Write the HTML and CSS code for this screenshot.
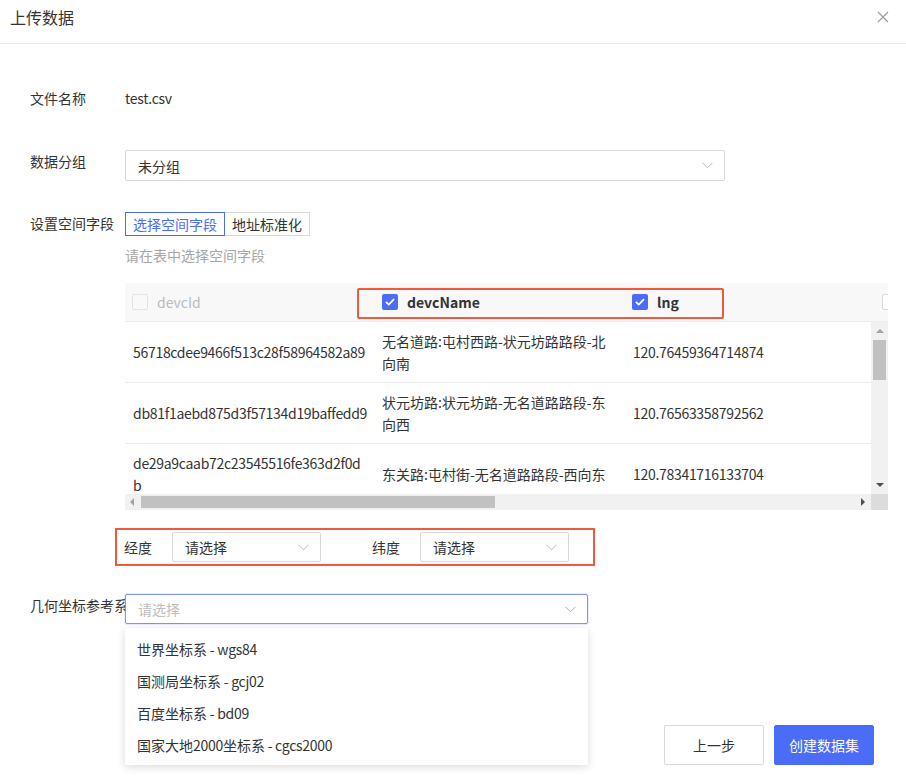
FILE: index.html
```html
<!DOCTYPE html>
<html lang="zh-CN">
<head>
<meta charset="utf-8">
<title>上传数据</title>
<link rel="stylesheet" href="styles.css">
</head>
<body>
<div class="modal">
  <div class="modal-header">
    <span class="modal-title">上传数据</span>
    <svg class="close" width="12" height="12" viewBox="0 0 12 12"><path d="M1 1L11 11M11 1L1 11" stroke="#999" stroke-width="1.1" fill="none"/></svg>
  </div>

  <div class="modal-body">
    <div class="form-item item-file">
      <div class="form-label">文件名称</div>
      <div class="form-value lt">test.csv</div>
    </div>

    <div class="form-item item-group">
      <div class="form-label">数据分组</div>
      <div class="select select-group">
        <span class="select-text">未分组</span>
        <svg class="chevron" width="11" height="7" viewBox="0 0 11 7"><path d="M0.5 0.8L5.5 5.8L10.5 0.8" stroke="#bbb" stroke-width="1" fill="none"/></svg>
      </div>
    </div>

    <div class="form-item item-spatial">
      <div class="form-label">设置空间字段</div>
      <div class="form-content">
        <div class="radio-group">
          <span class="radio-btn active">选择空间字段</span><span class="radio-btn">地址标准化</span>
        </div>
        <div class="hint">请在表中选择空间字段</div>

        <div class="table">
          <div class="thead">
            <div class="th"><span class="cb cb-disabled"></span><span class="th-text disabled">devcId</span></div>
            <div class="th"><span class="cb cb-checked"><svg width="10" height="8" viewBox="0 0 10 8"><path d="M1 4L3.8 6.6L9 1.2" stroke="#fff" stroke-width="1.8" fill="none"/></svg></span><span class="th-text">devcName</span></div>
            <div class="th"><span class="cb cb-checked"><svg width="10" height="8" viewBox="0 0 10 8"><path d="M1 4L3.8 6.6L9 1.2" stroke="#fff" stroke-width="1.8" fill="none"/></svg></span><span class="th-text">lng</span></div>
            <div class="th"><span class="cb cb-empty"></span></div>
          </div>
          <div class="tbody-wrap">
            <div class="tbody-view">
              <div class="tr">
                <div class="td lt">56718cdee9466f513c28f58964582a89</div>
                <div class="td">无名道路:屯村西路-状元坊路路段-北向南</div>
                <div class="td lt">120.76459364714874</div>
                <div class="td"></div>
              </div>
              <div class="tr">
                <div class="td lt">db81f1aebd875d3f57134d19baffedd9</div>
                <div class="td">状元坊路:状元坊路-无名道路路段-东向西</div>
                <div class="td lt">120.76563358792562</div>
                <div class="td"></div>
              </div>
              <div class="tr">
                <div class="td lt">de29a9caab72c23545516fe363d2f0d<br>b</div>
                <div class="td">东关路:屯村街-无名道路路段-西向东</div>
                <div class="td lt">120.78341716133704</div>
                <div class="td"></div>
              </div>
            </div>
            <div class="vscroll">
              <span class="arrow arrow-up"></span>
              <span class="vthumb"></span>
              <span class="arrow arrow-down"></span>
            </div>
          </div>
          <div class="hscroll-row">
            <div class="hscroll">
              <span class="arrow arrow-left"></span>
              <span class="hthumb"></span>
              <span class="arrow arrow-right"></span>
            </div>
            <div class="corner"></div>
          </div>
          <div class="hl-header"></div>
        </div>

        <div class="latlng">
          <span class="ll-label">经度</span>
          <div class="select select-ll">
            <span class="select-text">请选择</span>
            <svg class="chevron" width="11" height="7" viewBox="0 0 11 7"><path d="M0.5 0.8L5.5 5.8L10.5 0.8" stroke="#bbb" stroke-width="1" fill="none"/></svg>
          </div>
          <span class="ll-label ll-label2">纬度</span>
          <div class="select select-ll">
            <span class="select-text">请选择</span>
            <svg class="chevron" width="11" height="7" viewBox="0 0 11 7"><path d="M0.5 0.8L5.5 5.8L10.5 0.8" stroke="#bbb" stroke-width="1" fill="none"/></svg>
          </div>
        </div>
      </div>
    </div>

    <div class="form-item item-crs">
      <div class="form-label">几何坐标参考系</div>
      <div class="crs-wrap">
        <div class="select select-crs">
          <span class="select-text placeholder">请选择</span>
          <svg class="chevron" width="11" height="7" viewBox="0 0 11 7"><path d="M0.5 0.8L5.5 5.8L10.5 0.8" stroke="#aaa" stroke-width="1" fill="none"/></svg>
        </div>
        <div class="dropdown">
          <div class="option">世界坐标系<span class="lt"> - wgs84</span></div>
          <div class="option">国测局坐标系<span class="lt"> - gcj02</span></div>
          <div class="option">百度坐标系<span class="lt"> - bd09</span></div>
          <div class="option">国家大地<span class="lt">2000</span>坐标系<span class="lt"> - cgcs2000</span></div>
        </div>
      </div>
    </div>
  </div>

  <div class="modal-footer">
    <button class="btn btn-default">上一步</button>
    <button class="btn btn-primary">创建数据集</button>
  </div>
</div>
</body>
</html>
```

FILE: styles.css
```css
* { box-sizing: border-box; }
html, body { margin: 0; padding: 0; background: #fff; }
body {
  font-family: "Noto Sans CJK SC", "Noto Sans", sans-serif;
  font-size: 14px;
  color: #333;
}
.lt { letter-spacing: -0.3px; }
.modal {
  width: 906px;
  height: 780px;
  display: flex;
  flex-direction: column;
  background: #fff;
  overflow: hidden;
}
.modal-header {
  height: 44px;
  padding: 5px 16px 0 10px;
  border-bottom: 1px solid #e8e8e8;
  display: flex;
  justify-content: space-between;
  align-items: flex-start;
}
.modal-title { font-size: 16px; line-height: 24px; color: #333; }
.close { margin-top: 6px; margin-right: 1px; }

.modal-body { padding: 43px 0 0 30px; }
.form-item { display: flex; align-items: flex-start; }
.form-label { width: 95px; flex: none; line-height: 22px; white-space: nowrap; color: #333; }
.form-value { line-height: 22px; }
.item-group { margin-top: 41px; }
.item-spatial { margin-top: 31px; }
.item-crs { margin-top: 28px; }
.item-crs .form-label { margin-top: 0; }

.select {
  position: relative;
  display: flex;
  align-items: center;
  justify-content: space-between;
  border: 1px solid #d9d9d9;
  border-radius: 2px;
  background: #fff;
  padding: 0 11px 0 12px;
}
.select-text { line-height: 20px; color: #333; }
.select-text.placeholder { color: #bdbdbd; }
.select-group { width: 600px; height: 31px; }

.radio-group { display: flex; }
.radio-btn {
  height: 24px;
  line-height: 22px;
  padding: 0 7px;
  border: 1px solid #d9d9d9;
  color: #333;
  background: #fff;
}
.radio-btn.active { border-color: #4a6cf7; color: #4a6cf7; }
.radio-btn + .radio-btn { border-left: none; }
.hint { margin-top: 9px; line-height: 20px; color: #a6a6a6; }

.table {
  position: relative;
  width: 763px;
  margin-top: 18px;
}
.thead {
  height: 39px;
  background: #f8f8f8;
  border-bottom: 1px solid #ececec;
  display: grid;
  grid-template-columns: 250px 250px 250px 250px;
  overflow: hidden;
}
.th {
  display: flex;
  align-items: center;
  padding-left: 7px;
  gap: 9px;
}
.th-text { font-weight: 600; color: #333; }
.th-text.disabled { font-weight: 400; color: #bbb; }
.cb {
  width: 16px; height: 16px;
  border-radius: 2px;
  display: inline-flex; align-items: center; justify-content: center;
  flex: none;
}
.cb-checked { background: #4a6cf7; }
.cb-disabled { border: 1px solid #e3e3e3; background: #f9f9f9; }
.cb-empty { border: 1px solid #d9d9d9; background: #fff; }

.tbody-wrap { display: flex; height: 172px; }
.tbody-view { width: 746px; height: 172px; overflow: hidden; }
.tr {
  display: grid;
  grid-template-columns: 250px 250px 250px 250px;
  width: 1000px;
  border-bottom: 1px solid #ececec;
}
.td {
  min-height: 60px;
  padding: 8px 8px 8px 7px;
  line-height: 22px;
  display: flex;
  align-items: center;
  color: #333;
}
.td.lt { padding-left: 8px; }
.vscroll {
  position: relative;
  width: 17px;
  height: 172px;
  background: #f1f1f1;
}
.vthumb {
  position: absolute;
  left: 2px; top: 18px;
  width: 13px; height: 40px;
  background: #c1c1c1;
}
.arrow { position: absolute; width: 0; height: 0; }
.arrow-up { left: 5px; top: 7px; border-left: 4px solid transparent; border-right: 4px solid transparent; border-bottom: 4px solid #a3a3a3; }
.arrow-down { left: 5px; bottom: 7px; border-left: 4px solid transparent; border-right: 4px solid transparent; border-top: 4px solid #505050; }
.hscroll-row { display: flex; height: 16px; }
.hscroll { position: relative; width: 746px; height: 16px; background: #f1f1f1; }
.hthumb { position: absolute; left: 16px; top: 2px; width: 354px; height: 12px; background: #c1c1c1; }
.arrow-left { left: 5px; top: 4px; border-top: 4px solid transparent; border-bottom: 4px solid transparent; border-right: 4px solid #a3a3a3; }
.arrow-right { right: 6px; top: 4px; border-top: 4px solid transparent; border-bottom: 4px solid transparent; border-left: 4px solid #505050; }
.corner { width: 17px; height: 16px; background: #dcdcdc; }

.hl-header {
  position: absolute;
  left: 232px; top: 5px;
  width: 367px; height: 31px;
  border: 2px solid #ef5a3c;
  border-radius: 2px;
}

.latlng {
  display: flex;
  align-items: center;
  width: 480px;
  height: 38px;
  margin: 18px 0 0 -10px;
  padding: 0 0 0 7px;
  border: 2px solid #ef5a3c;
}
.ll-label { width: 48px; line-height: 22px; color: #333; }
.ll-label2 { margin-left: 51px; }
.select-ll { width: 149px; height: 30px; }

.crs-wrap { position: relative; }
.select-crs { width: 463px; height: 30px; border-color: #7d95f5; box-shadow: 0 0 0 1px rgba(74,108,247,0.12); }
.dropdown {
  position: absolute;
  left: 0; top: 34px;
  width: 463px;
  padding: 5px 0 4px;
  background: #fff;
  border-radius: 2px;
  box-shadow: 0 2px 8px rgba(0,0,0,0.15);
  z-index: 2;
}
.option { height: 32px; line-height: 32px; padding-left: 12px; color: #333; white-space: nowrap; }

.modal-footer {
  margin-top: auto;
  padding: 0 32px 15px 0;
  display: flex;
  justify-content: flex-end;
  gap: 10px;
}
.btn {
  width: 100px; height: 40px;
  border-radius: 2px;
  font-family: inherit;
  font-size: 14px;
  cursor: pointer;
}
.btn-default { background: #fff; border: 1px solid #d9d9d9; color: #333; }
.btn-primary { background: #4a6cf7; border: 1px solid #4a6cf7; color: #fff; }
```
